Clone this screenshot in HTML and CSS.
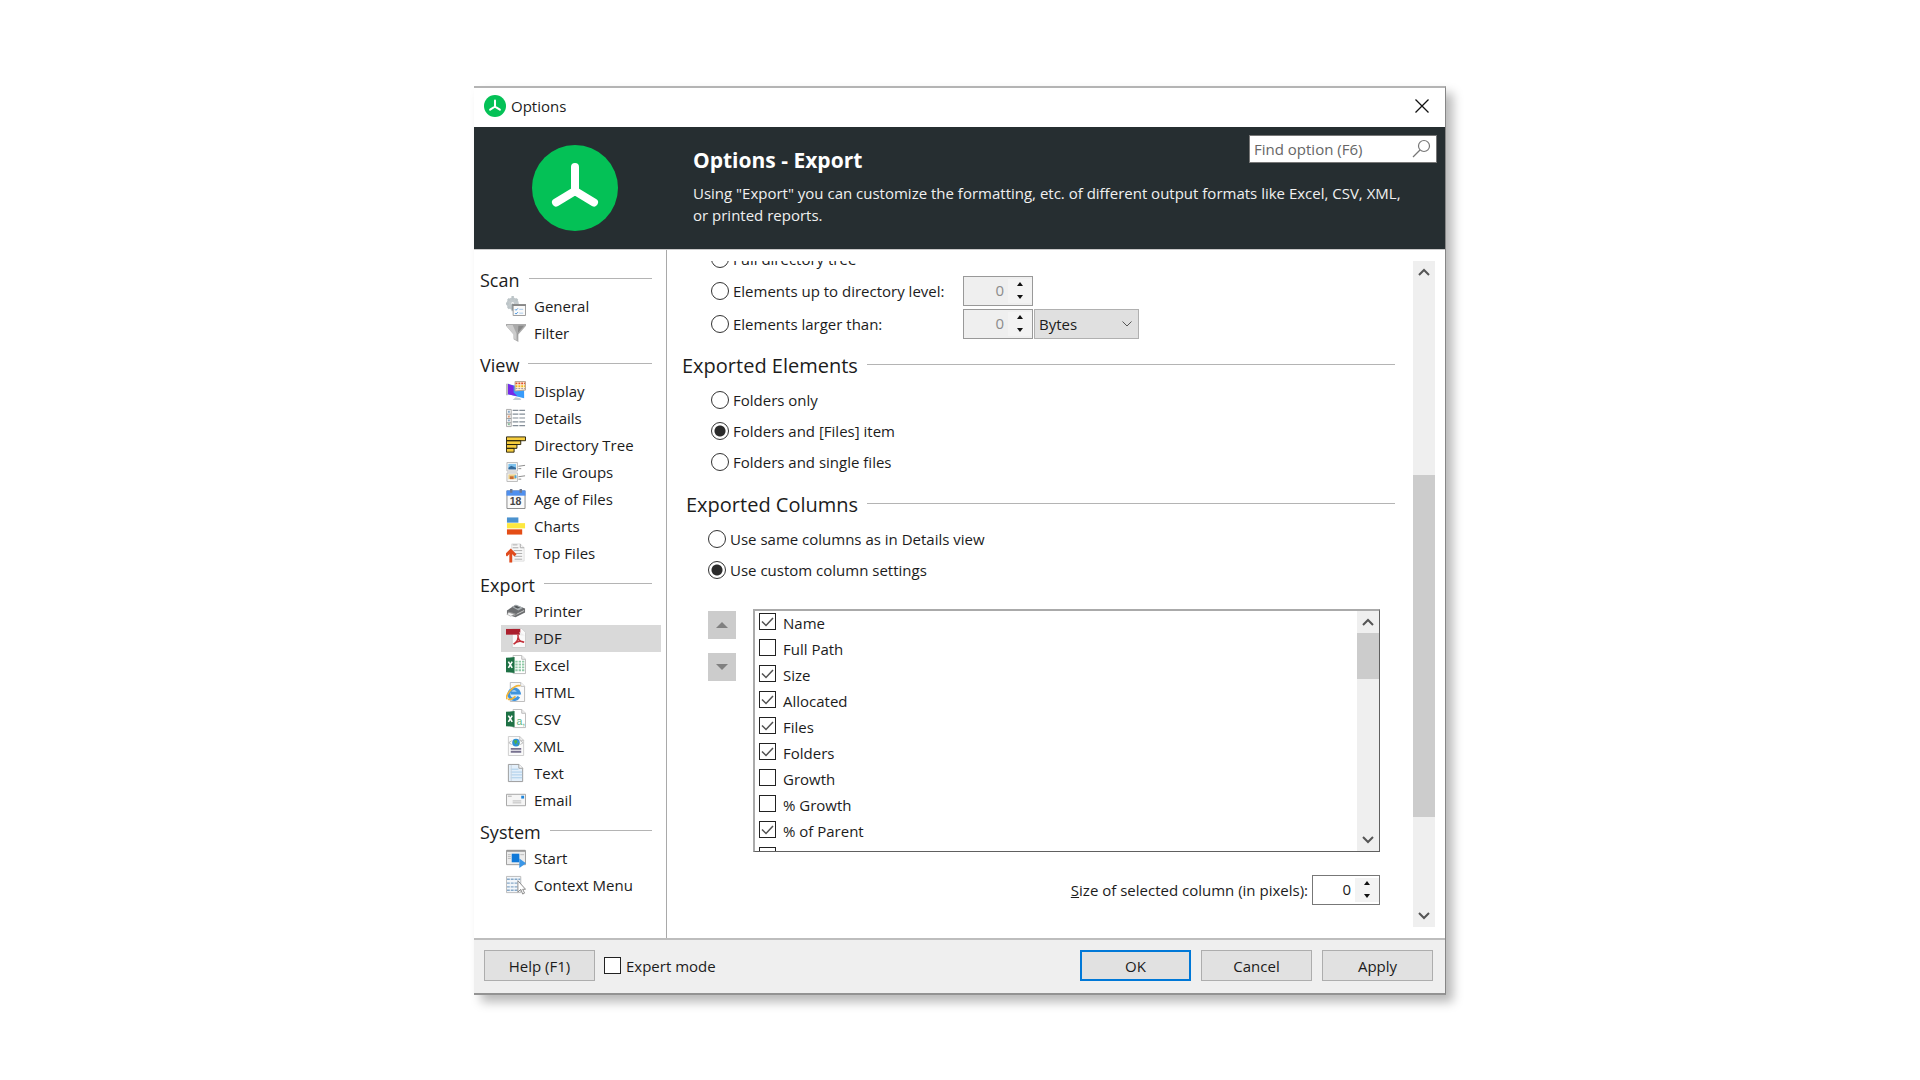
FILE: index.html
```html
<!DOCTYPE html>
<html lang="en">
<head>
<meta charset="utf-8">
<title>Options - Export</title>
<link rel="stylesheet" href="styles.css">
</head>
<body>
<div class="window" role="dialog" aria-labelledby="window-title">
  <div class="titlebar">
    <svg class="app-icon" viewBox="0 0 86 86" aria-hidden="true"><circle cx="43" cy="43" r="43" fill="#04c156"/><path d="M43 22V45L24 57M43 45L62 57" fill="none" stroke="#fff" stroke-width="8" stroke-linecap="round"/></svg>
    <span id="window-title" class="window-title">Options</span>
    <button class="close" type="button" aria-label="Close"><svg width="14" height="14" viewBox="0 0 14 14"><path d="M.5.5l13 13M13.5.5l-13 13" stroke="#111" stroke-width="1.3"/></svg></button>
  </div>

  <header class="banner">
    <div class="brand"><svg class="logo" viewBox="0 0 86 86" aria-hidden="true"><circle cx="43" cy="43" r="43" fill="#04c156"/><path d="M43 22V46L24 57.500M43 46L62 57.500" fill="none" stroke="#fff" stroke-width="8" stroke-linecap="round" stroke-linejoin="round"/></svg></div>
    <div class="intro">
      <h1>Options - Export</h1>
      <p>Using "Export" you can customize the formatting, etc. of different output formats like Excel, CSV, XML, or printed reports.</p>
    </div>
    <div class="search">
      <input type="text" placeholder="Find option (F6)" aria-label="Find option">
      <svg width="19" height="19" viewBox="0 0 19 19" aria-hidden="true"><circle cx="12" cy="7" r="5.500" fill="none" stroke="#777" stroke-width="1.200"/><path d="M8 11L1 18" stroke="#777" stroke-width="1.300"/></svg>
    </div>
  </header>

  <div class="body">
    <nav class="sidebar">
      <section>
        <h2>Scan</h2>
        <a href="#general"><svg viewBox="0 0 21 21"><circle cx="7" cy="8" r="4" fill="none" stroke="#c3cacd" stroke-width="5"/><path d="M7 0v4M7 12v4M0 8h3M2 3l2 2M12 3l-2 2M2 13l2-2" stroke="#bcc4c7" stroke-width="2.500"/><path d="M7 8v7" stroke="#8b9598" stroke-width="2"/><path d="M7.500 9.500h13v11h-13z" fill="#fafafa" stroke="#999"/><path d="M7 9.500h14" stroke="#888" stroke-width="2"/><path d="M9.500 14l1 1 2-2M9.500 18l1 1 2-2" fill="none" stroke="#3c8ddc"/><path d="M14 14h4M14 18h4" stroke="#a8c8e8"/></svg>General</a>
        <a href="#filter"><svg viewBox="0 0 21 21"><path d="M0 1h21v2l-8 9v8l-5-3v-5L0 3z" fill="#aaa"/><path d="M1 2h6l4 9v7l-3-2v-4L1 4z" fill="#ccc"/><path d="M13 3h6l-7 8v8" fill="#888"/></svg>Filter</a>
      </section>
      <section>
        <h2>View</h2>
        <a href="#display"><svg viewBox="0 0 21 21"><path d="M2 3l17 4v11L2 14z" fill="#389bfa"/><path d="M2 3l6 2v7l4 4-10-2z" fill="#7628e8"/><path d="M1 3v12" stroke="#bbb" stroke-width="2"/><path d="M10 17l5 1 1 2H7z" fill="#c2ccd4"/><path d="M9.500.5h11v9l-11 1z" fill="#fff4dd" stroke="#b5a18f"/><path d="M10 2.500h10" stroke="#e04c28" stroke-width="2" stroke-dasharray="2 1"/><path d="M10 5.500h10" stroke="#f2b91e" stroke-width="2" stroke-dasharray="2 1"/><path d="M10 8h10" stroke="#9a8b99" stroke-dasharray="2 1"/></svg>Display</a>
        <a href="#details"><svg viewBox="0 0 21 21"><path d="M.5 1.500h5v18h-5z" fill="#f4f4f4" stroke="#aaa"/><path d="M.5 6.500h5M.5 11h5M.5 15.500h5" stroke="#999"/><path d="M2 4h2M2 13h2" stroke="#87a9c8" stroke-width="2"/><path d="M2 9h2" stroke="#e59a70" stroke-width="2"/><path d="M2 17h2" stroke="#8b9" stroke-width="2"/><path d="M7 2.500h6M14 2.500h6M7 6.500h6M14 6.500h6M7 10.500h6M14 10.500h6M7 14.500h6M14 14.500h6M7 18.500h6M14 18.500h6" stroke="#838d97" stroke-width="1.300"/></svg>Details</a>
        <a href="#tree"><svg viewBox="0 0 21 21"><g fill="#f6cd3e" stroke="#29240e"><path d="M.5 2h20v4H.5zM.5 6h15v4H.5zM.5 10h11v4H.5zM.5 14h8v4H.5z"/></g></svg>Directory Tree</a>
        <a href="#groups"><svg viewBox="0 0 21 21"><path d="M1 .5h11v9H1zM1 11.500h11v9H1z" fill="#f7f7f7" stroke="#bbb"/><path d="M2.500 2h8v5h-8z" fill="#7fc3ee"/><path d="M2.500 6l3-2 5 2v2h-8z" fill="#346b9c"/><path d="M2.500 13h8v5h-8z" fill="#ecd089"/><path d="M4 15h4v3H4z" fill="#c96b32"/><path d="M9 14h2v3H9z" fill="#4aa3dc"/><path d="M13 4.500l7-1M13 7h3M13 15.500l7-1M13 18h3" stroke="#888"/></svg>File Groups</a>
        <a href="#age"><svg viewBox="0 0 21 21"><path d="M1 2h19v18.500H1z" fill="#fafafa" stroke="#888"/><path d="M.5 1.500h20V7H.5z" fill="#4f8fee"/><path d="M5.500 0v4M15.500 0v4" stroke="#6c7890" stroke-width="2.500"/><text x="4" y="17" class="cal">18</text></svg>Age of Files</a>
        <a href="#charts"><svg viewBox="0 0 21 21"><path d="M1 1.500h12V7H1z" fill="#4b92ce"/><path d="M1 7.500h19V13H1z" fill="#fde83f"/><path d="M1 14h16v5.500H1z" fill="#e44d16"/></svg>Charts</a>
        <a href="#top"><svg viewBox="0 0 21 21"><path d="M6 1h9l4 4v14H6z" fill="#f8f8f8" stroke="#ddd"/><path d="M15 1v4h4M7 2h5M7 5h6M8 8h9M9 11h8M9 14h8M9 17h8" fill="none" stroke="#aaa"/><path d="M5 20.500V9" stroke="#e04b1d" stroke-width="3"/><path d="M0 13l5-5 5 5" fill="none" stroke="#e04b1d" stroke-width="3"/></svg>Top Files</a>
      </section>
      <section>
        <h2>Export</h2>
        <a href="#printer"><svg viewBox="0 0 21 21"><path d="M1 10l9-6 10 4v4l-10 5-9-3z" fill="#6b6d6f"/><path d="M6 6l5-2 7 3-5 3z" fill="#aab0b3"/><path d="M8 6l3-1 4 2-3 1z" fill="#54585a"/><path d="M2 11l8 2v3l-8-2z" fill="#999"/><path d="M3 12l6 2-4 2-4-2z" fill="#f4f4f4" stroke="#888" stroke-width=".5"/><path d="M11 14l8-4" stroke="#ccc"/></svg>Printer</a>
        <a href="#pdf" class="selected" aria-current="page"><svg viewBox="0 0 21 21"><path d="M6.500.5h10l4 4v16h-14z" fill="#fafafa" stroke="#ccc"/><path d="M0 1h15v6H0z" fill="#ab1f2d"/><path d="M14 4l6 4h-5z" fill="#eee"/><path d="M12.500 7c1 4 0 7-4.500 10M8 17c3-3 7-4 11-2M13 10c0 3 3 5 6 5" fill="none" stroke="#c23039" stroke-width="1.600"/></svg>PDF</a>
        <a href="#excel"><svg viewBox="0 0 21 21"><path d="M7.500.5h9l4 4v15h-13z" fill="#fff" stroke="#bbb"/><path d="M16.500.5v4h4" fill="#eee" stroke="#bbb"/><path d="M11 6v12M14.500 6v12M18 6v12" stroke="#8fc9a6" stroke-width="2.500" stroke-dasharray="2 1"/><path d="M0 3l9-1v17l-9-1z" fill="#1e7145"/><path d="M2.500 7l4 6.500M6.500 7l-4 6.500" stroke="#fff" stroke-width="1.700"/></svg>Excel</a>
        <a href="#html"><svg viewBox="0 0 21 21"><path d="M4.500.5h11l4 4v16h-15z" fill="#fafafa" stroke="#bbb"/><path d="M15.500.5v4h4" fill="#fff" stroke="#bbb"/><circle cx="8.500" cy="11.500" r="6.500" fill="#d9edfb"/><path d="M13.500 15.500A5.600 5.600 0 1 1 14 11.500H5" fill="none" stroke="#4094de" stroke-width="3"/><path d="M1 18C-1 13 9 2 15 4M2 18c3 1 6-1 8-3" fill="none" stroke="#f1b53b" stroke-width="1.800"/></svg>HTML</a>
        <a href="#csv"><svg viewBox="0 0 21 21"><path d="M7.500.5h9l4 4v15h-13z" fill="#fff" stroke="#bbb"/><path d="M16.500.5v4h4" fill="#eee" stroke="#bbb"/><text x="11" y="17" class="csv">a,</text><path d="M0 3l9-1v17l-9-1z" fill="#1e7145"/><path d="M2.500 7l4 6.500M6.500 7l-4 6.500" stroke="#fff" stroke-width="1.700"/></svg>CSV</a>
        <a href="#xml"><svg viewBox="0 0 21 21"><path d="M2.500.5h12l4 4v16h-16z" fill="#fafafa" stroke="#ccc"/><path d="M14.500.5v4h4M6 5L3 7l3 2M15 5l3 2-3 2" fill="none" stroke="#bbb"/><circle cx="10.500" cy="7" r="4" fill="#2c8fd6"/><path d="M8 5l3-1 1 2-2 3zM12 8l2-1-1 3z" fill="#4eae4b"/><path d="M5 13.500h11M5 16.500h11" stroke="#77718f" stroke-width="2"/></svg>XML</a>
        <a href="#text"><svg viewBox="0 0 21 21"><path d="M2.500 1.500h11l4 4v14h-15z" fill="#e3effa" stroke="#999"/><path d="M13.500 1.500v4h4" fill="#fff" stroke="#999"/><path d="M5 6.500h8M5 9.500h12M5 12.500h12M5 15.500h12" stroke="#a8cbe9"/><path d="M5.500 2v17" stroke="#c8d4de"/></svg>Text</a>
        <a href="#email"><svg viewBox="0 0 21 21"><path d="M.5 4.500h20v12H.5z" fill="#f5f5f5" stroke="#a3a3a3"/><path d="M2 6.500h4" stroke="#aaa"/><path d="M16 6h3v3h-3z" fill="#1f86dc"/><path d="M7 11.500h9M7 13.500h9" stroke="#bbb"/></svg>Email</a>
      </section>
      <section>
        <h2>System</h2>
        <a href="#start"><svg viewBox="0 0 21 21"><path d="M.5 2.500h20v15H.5z" fill="#ececec" stroke="#999"/><path d="M1 3h19" stroke="#999" stroke-width="2"/><path d="M2 7h3M2 9h3M2 11h3M15 7h4" stroke="#bbb"/><path d="M6 6h8v9H6z" fill="#1079d8"/><path d="M14 11l7 5-7 5z" fill="#3a96e6"/></svg>Start</a>
        <a href="#context"><svg viewBox="0 0 21 21"><path d="M.5 1.500h15v17H.5z" fill="#f2f6fa" stroke="#bbb"/><path d="M1 4.500h14M1 8.500h14M1 12.500h14M1 16h12" stroke="#86a8c8" stroke-width="1.500" stroke-dasharray="3 1"/><path d="M12.500 6v12l3-3 2 5 2-1-2-4h3z" fill="#fff" stroke="#888"/></svg>Context Menu</a>
      </section>
    </nav>

    <main class="main">
      <div class="viewport">
        <form class="content">
          <div class="levels">
            <label class="option"><input type="radio" name="depth">Full directory tree</label>
            <label class="option"><input type="radio" name="depth">Elements up to directory level:</label>
            <div class="spin disabled"><input type="text" value="0" disabled aria-label="Directory level"><span class="steps"><button type="button" class="up" disabled aria-label="Increase level"></button><button type="button" class="down" disabled aria-label="Decrease level"></button></span></div>
            <label class="option"><input type="radio" name="depth">Elements larger than:</label>
            <div class="amount">
              <div class="spin disabled"><input type="text" value="0" disabled aria-label="Minimum size"><span class="steps"><button type="button" class="up" disabled aria-label="Increase size"></button><button type="button" class="down" disabled aria-label="Decrease size"></button></span></div>
              <select class="unit" aria-label="Unit"><option>Bytes</option></select>
            </div>
          </div>

          <h2 class="rule">Exported Elements</h2>
          <div class="options">
            <label class="option"><input type="radio" name="elements">Folders only</label>
            <label class="option"><input type="radio" name="elements" checked>Folders and [Files] item</label>
            <label class="option"><input type="radio" name="elements">Folders and single files</label>
          </div>

          <div class="columns">
            <h2 class="rule">Exported Columns</h2>
            <div class="options">
              <label class="option"><input type="radio" name="columns">Use same columns as in Details view</label>
              <label class="option"><input type="radio" name="columns" checked>Use custom column settings</label>
            </div>
            <div class="picker">
              <div class="movers">
                <button type="button" class="up" aria-label="Move up"></button>
                <button type="button" class="down" aria-label="Move down"></button>
              </div>
              <div class="listbox">
                <div class="rows">
                  <label><input type="checkbox" checked>Name</label>
                  <label><input type="checkbox">Full Path</label>
                  <label><input type="checkbox" checked>Size</label>
                  <label><input type="checkbox" checked>Allocated</label>
                  <label><input type="checkbox" checked>Files</label>
                  <label><input type="checkbox" checked>Folders</label>
                  <label><input type="checkbox">Growth</label>
                  <label><input type="checkbox">% Growth</label>
                  <label><input type="checkbox" checked>% of Parent</label>
                  <label><input type="checkbox" aria-label="Next column"></label>
                </div>
                <div class="scrollbar list-scroll">
                  <svg width="12" height="8" viewBox="0 0 12 8"><path d="M1 7l5-5 5 5" fill="none" stroke="#555" stroke-width="2"/></svg>
                  <div class="thumb"></div>
                  <svg width="12" height="8" viewBox="0 0 12 8"><path d="M1 1l5 5 5-5" fill="none" stroke="#555" stroke-width="2"/></svg>
                </div>
              </div>
            </div>
            <div class="size-row">
              <label for="col-size"><u>S</u>ize of selected column (in pixels):</label>
              <div class="spin"><input id="col-size" type="text" value="0"><span class="steps"><button type="button" class="up" aria-label="Increase column size"></button><button type="button" class="down" aria-label="Decrease column size"></button></span></div>
            </div>
          </div>
        </form>
      </div>
      <div class="scrollbar page-scroll">
        <svg width="12" height="8" viewBox="0 0 12 8"><path d="M1 7l5-5 5 5" fill="none" stroke="#555" stroke-width="2"/></svg>
        <div class="thumb"></div>
        <svg width="12" height="8" viewBox="0 0 12 8"><path d="M1 1l5 5 5-5" fill="none" stroke="#555" stroke-width="2"/></svg>
      </div>
    </main>
  </div>

  <footer class="footer">
    <button type="button" class="btn">Help (F1)</button>
    <label class="expert"><input type="checkbox">Expert mode</label>
    <div class="actions">
      <button type="button" class="btn primary">OK</button>
      <button type="button" class="btn">Cancel</button>
      <button type="button" class="btn">Apply</button>
    </div>
  </footer>
</div>
</body>
</html>
```
FILE: styles.css
```css
* { box-sizing: border-box; }

body {
  margin: 0;
  min-height: 100vh;
  display: flex;
  align-items: center;
  justify-content: center;
  background: #fff;
  color: #1c1c1c;
  font: 15px/22px "Open Sans", "Noto Sans", sans-serif;
}

button, input, select { font: inherit; color: inherit; margin: 0; padding: 0; }
h1, h2, p { margin: 0; }

.window {
  width: 100%;
  max-width: 972px;
  background: #fff;
  border-top: 2px solid #b4b4b4;
  border-right: 1px solid #868686;
  border-bottom: 2px solid #939393;
  box-shadow: 7px 7px 10px rgba(0, 0, 0, .28);
}

/* Title bar */
.titlebar {
  display: flex;
  align-items: center;
  height: 39px;
  padding: 0 16px 2px 10px;
}
.app-icon { width: 22px; height: 22px; margin-right: 5px; }
.window-title { flex: 1; }
.close { display: flex; border: 0; background: none; }

/* Banner */
.banner {
  display: flex;
  position: relative;
  min-height: 122px;
  background: #262e31;
  color: #f0f0f0;
}
.brand { width: 219px; padding: 18px 0 0 58px; flex: none; }
.logo { display: block; width: 86px; height: 86px; }
.intro { flex: 1; padding: 20px 28px 0 0; }
.intro h1 { font-size: 21px; line-height: 26px; color: #fff; margin-bottom: 9px; }
.search {
  position: absolute;
  top: 8px;
  right: 8px;
  width: 188px;
  height: 28px;
  display: flex;
  align-items: center;
  padding: 0 5px 0 4px;
  background: #fff;
  border: 1px solid #777;
}
.search input { flex: 1; min-width: 0; border: 0; outline: 0; background: none; color: #222; }
.search input::placeholder { color: #666; opacity: 1; }

/* Body */
.body { display: flex; border-top: 1px solid #c9c9c9; }

.sidebar {
  flex: none;
  width: 193px;
  padding: 17px 5px 0 6px;
  border-right: 1px solid #a9a9a9;
}
.sidebar section { margin-bottom: 5px; }
.sidebar h2, .rule {
  display: flex;
  align-items: center;
  gap: 9px;
  font-weight: 400;
}
.sidebar h2 { font-size: 18px; line-height: 26px; margin-right: 9px; }
.sidebar h2::after, .rule::after {
  content: "";
  flex: 1;
  height: 1px;
  margin-bottom: 3px;
  background: #b4b4b4;
}
.sidebar a {
  display: flex;
  align-items: center;
  gap: 8px;
  height: 27px;
  margin-left: 21px;
  padding: 0 0 1px 5px;
  color: inherit;
  text-decoration: none;
}
.sidebar a svg { width: 20px; height: 20px; }
.sidebar .selected { background: #d9d9d9; }
.cal { font: bold 11px "Liberation Sans", sans-serif; fill: #444; }
.csv { font: 11px "Liberation Sans", sans-serif; fill: #5cb583; }

.main { flex: 1; min-width: 0; display: flex; padding: 11px 10px 11px 0; }
.viewport { flex: 1; min-width: 0; overflow: hidden; }
.content { margin-top: -16px; padding: 0 18px 22px 15px; }

.option { display: flex; align-items: center; gap: 4px; height: 31px; }
input[type="radio"] {
  appearance: none;
  flex: none;
  width: 18px;
  height: 18px;
  border: 1px solid #333;
  border-radius: 50%;
  background: #fff;
}
input[type="radio"]:checked { background: radial-gradient(circle, #2b2b2b 5px, #fff 6px); }
input[type="checkbox"] {
  appearance: none;
  flex: none;
  width: 17px;
  height: 17px;
  border: 1px solid #222;
  background: #fff;
}
input[type="checkbox"]:checked {
  background: url("data:image/svg+xml,%3Csvg xmlns='http://www.w3.org/2000/svg' viewBox='0 0 15 15'%3E%3Cpath d='M2 7.500l4 4L13 4' fill='none' stroke='%23505050' stroke-width='1.500'/%3E%3C/svg%3E") center / 15px 15px no-repeat;
}

.levels {
  display: grid;
  grid-template-columns: 252px 1fr;
  align-items: center;
  row-gap: 3px;
  padding-left: 29px;
}
.levels .option { height: 30px; }
.levels .option:first-child { grid-column: 1 / -1; height: 28px; }
.amount { display: flex; gap: 1px; }

.spin {
  display: flex;
  width: 70px;
  height: 30px;
  border: 1px solid #777;
  background: #fff;
}
.spin input { flex: 1; min-width: 0; border: 0; background: none; text-align: right; padding-bottom: 2px; }
.spin.disabled { background: #efefef; border-color: #999; }
.spin.disabled input { color: #8c8c8c; }
.steps {
  display: flex;
  flex-direction: column;
  justify-content: center;
  gap: 9px;
  width: 24px;
  padding-left: 9px;
  margin: 2px 0 2px 4px;
  background: #f3f3f3;
}
.steps button, .movers button { border: 0; background: none; }
.steps button::before, .movers button::before { content: ""; display: block; margin: auto; border: solid transparent; border-width: 0 3px; width: 0; }
.steps button { width: 6px; height: 4px; }
.steps .up::before { border-bottom: 4px solid #111; }
.steps .down::before { border-top: 4px solid #111; }

.unit {
  appearance: none;
  width: 105px;
  height: 30px;
  padding: 0 4px;
  border: 1px solid #b0b0b0;
  border-radius: 0;
  background: #e0e0e0 url("data:image/svg+xml,%3Csvg xmlns='http://www.w3.org/2000/svg' viewBox='0 0 10 6'%3E%3Cpath d='M.5.5L5 5 9.500.5' fill='none' stroke='%23555'/%3E%3C/svg%3E") right 6px center / 10px 6px no-repeat;
}

.rule { font-size: 20px; line-height: 28px; margin: 13px 0 5px; }
.options { padding-left: 29px; }
.columns { padding-left: 4px; }
.columns .options { padding-left: 22px; }

.picker { display: flex; gap: 17px; margin-top: 23px; padding: 0 15px 0 22px; }
.movers { display: flex; flex-direction: column; gap: 14px; padding-top: 2px; }
.movers button { width: 28px; height: 28px; background: #ccc; }
.movers button::before { border-width: 0 6px; }
.movers .up::before { border-bottom: 6px solid #808080; }
.movers .down::before { border-top: 6px solid #808080; }
.listbox {
  flex: 1;
  display: flex;
  height: 243px;
  overflow: hidden;
  border: 1px solid #606060;
  border-top: 2px solid #aaa;
  border-left: 2px solid #aaa;
}
.rows { flex: 1; padding-left: 4px; margin-top: -1px; }
.rows label { display: flex; align-items: center; gap: 7px; height: 26px; }
.rows input { margin-bottom: 2px; }

.scrollbar {
  display: flex;
  flex-direction: column;
  align-items: center;
  width: 22px;
  padding: 7px 0;
  background: #efefef;
}
.scrollbar svg { flex: none; }
.scrollbar .thumb { width: 100%; background: #ccc; }
.list-scroll .thumb { height: 46px; margin: 7px 0 auto; }
.page-scroll .thumb { flex: 342; }
.page-scroll::before { content: ""; flex: 199; order: 1; }
.page-scroll::after { content: ""; flex: 95; order: 3; }
.page-scroll .thumb { order: 2; }
.page-scroll svg:last-of-type { order: 4; }

.size-row {
  display: flex;
  align-items: center;
  justify-content: flex-end;
  gap: 4px;
  margin-top: 23px;
  padding-right: 15px;
}
.size-row .spin { width: 68px; }

/* Footer */
.footer {
  display: flex;
  align-items: center;
  height: 55px;
  padding: 0 12px 1px 10px;
  background: #efefef;
  border-top: 2px solid #bdbdbd;
}
.btn {
  width: 111px;
  height: 31px;
  border: 1px solid #adadad;
  background: #e1e1e1;
}
.primary { border: 2px solid #0078d7; }
.expert { display: flex; align-items: center; gap: 5px; margin-left: 9px; }
.actions { display: flex; gap: 10px; margin-left: auto; }
```
